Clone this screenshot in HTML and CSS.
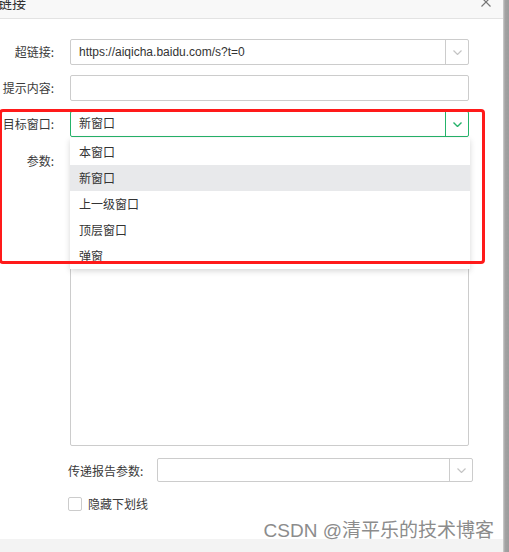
FILE: index.html
```html
<!DOCTYPE html>
<html lang="zh-CN">
  <head>
    <meta charset="utf-8">
    <link rel="stylesheet" href="styles.css">
  </head>
  <body>
    <div class="window">
      <div class="dialog">
        <div class="dlg-head">
          <span class="dlg-title">链接</span>
          <span class="dlg-close">
            <svg width="10" height="10" viewBox="0 0 10 10"><path d="M0.5 0.5 L9.5 9.5 M9.5 0.5 L0.5 9.5" stroke="#777" stroke-width="1.2" fill="none"/></svg>
          </span>
        </div>

        <div class="dlg-body">
          <div class="form-grid">
            <label class="lbl">超链接:</label>
            <div class="select">
              <span class="select-val">https://aiqicha.baidu.com/s?t=0</span>
              <span class="select-btn">
                <svg width="9" height="5" viewBox="0 0 9 5"><path d="M0.5 0.5 L4.5 4.5 L8.5 0.5" stroke="#c4c4c4" stroke-width="1.2" fill="none"/></svg>
              </span>
            </div>

            <label class="lbl">提示内容:</label>
            <div class="text-input"></div>

            <label class="lbl">目标窗口:</label>
            <div class="select active">
              <span class="select-val">新窗口</span>
              <span class="select-btn">
                <svg width="9" height="5" viewBox="0 0 9 5"><path d="M0.5 0.5 L4.5 4.5 L8.5 0.5" stroke="#25b36a" stroke-width="1.4" fill="none"/></svg>
              </span>
              <ul class="menu">
                <li>本窗口</li>
                <li class="hover">新窗口</li>
                <li>上一级窗口</li>
                <li>顶层窗口</li>
                <li>弹窗</li>
              </ul>
            </div>

            <label class="lbl lbl-top">参数:</label>
            <div class="textarea"></div>
          </div>

          <div class="extra">
            <div class="extra-row">
              <label class="lbl-plain">传递报告参数:</label>
              <div class="select small">
                <span class="select-val"></span>
                <span class="select-btn">
                  <svg width="9" height="5" viewBox="0 0 9 5"><path d="M0.5 0.5 L4.5 4.5 L8.5 0.5" stroke="#c4c4c4" stroke-width="1.2" fill="none"/></svg>
                </span>
              </div>
            </div>
            <label class="check-row">
              <span class="checkbox"></span>
              <span>隐藏下划线</span>
            </label>
          </div>
        </div>

        <div class="dlg-foot"></div>

        <div class="mark-box"></div>
        <div class="watermark">CSDN @清平乐的技术博客</div>
      </div>
      <div class="scrollbar"></div>
    </div>
  </body>
</html>
```

FILE: styles.css
```css
body {
  margin: 0;
  background: #ffffff;
  font-family: "Liberation Sans", "Noto Sans CJK SC", sans-serif;
  font-size: 12px;
  color: #333333;
  overflow: hidden;
}

.window {
  display: flex;
  align-items: flex-start;
  height: 552px;
  overflow: hidden;
}

.dialog {
  position: relative;
  width: 503px;
  height: 562px;
  margin-top: -10px;
  display: flex;
  flex-direction: column;
  background: #ffffff;
}

.scrollbar {
  width: 6px;
  height: 552px;
  background: linear-gradient(to right, #d0d0d0, #a3a3a3 2px, #9c9c9c);
}

.dlg-head {
  height: 29px;
  box-sizing: border-box;
  background: #f8f8f8;
  border-bottom: 1px solid #e3e3e3;
  display: flex;
  justify-content: space-between;
  align-items: center;
  padding: 0 12px 5px 0;
}

.dlg-title {
  font-family: "Noto Sans CJK SC", sans-serif;
  font-size: 14px;
  color: #333333;
  margin-left: -2px;
}

.dlg-close {
  display: flex;
}

.dlg-body {
  padding-top: 20px;
}

.form-grid {
  display: grid;
  grid-template-columns: 54px 399px;
  grid-template-rows: 26px 26px 26px 299px;
  column-gap: 16px;
  row-gap: 10px;
}

.lbl {
  font-family: "Noto Sans CJK SC", sans-serif;
  text-align: right;
  white-space: nowrap;
  line-height: 26px;
  color: #3a3a3a;
}

.lbl-top {
  line-height: 14px;
  padding-top: 7px;
}

.select,
.text-input,
.textarea {
  box-sizing: border-box;
  border: 1px solid #cccccc;
  border-radius: 2px;
  background: #ffffff;
}

.select {
  position: relative;
  display: flex;
}

.select-val {
  flex: 1;
  padding-left: 8px;
  line-height: 24px;
  color: #333333;
}

.select-btn {
  width: 22px;
  border-left: 1px solid #cccccc;
  display: flex;
  align-items: center;
  justify-content: center;
}

.select.active {
  border-color: #25b36a;
}

.select.active .select-btn {
  border-left-color: #25b36a;
}

.menu {
  position: absolute;
  left: -1px;
  top: 26px;
  width: 400px;
  margin: 0;
  padding: 1px 0 0;
  list-style: none;
  background: #ffffff;
  box-shadow: 0 2px 6px rgba(0, 0, 0, 0.16);
  z-index: 2;
}

.menu li {
  height: 26px;
  line-height: 26px;
  padding-left: 9px;
  font-family: "Noto Sans CJK SC", sans-serif;
  color: #333333;
}

.menu li.hover {
  background: #e8e9eb;
}

.extra {
  padding-left: 68px;
}

.extra-row {
  display: flex;
  align-items: center;
  margin-top: 12px;
  gap: 14px;
}

.lbl-plain {
  font-family: "Noto Sans CJK SC", sans-serif;
  width: 75px;
  white-space: nowrap;
  color: #3a3a3a;
}

.select.small {
  width: 316px;
  height: 24px;
}

.select.small .select-val {
  line-height: 22px;
}

.check-row {
  display: flex;
  align-items: center;
  gap: 6px;
  margin-top: 13px;
  font-family: "Noto Sans CJK SC", sans-serif;
  color: #3a3a3a;
}

.checkbox {
  width: 14px;
  height: 14px;
  box-sizing: border-box;
  border: 1px solid #cccccc;
  border-radius: 2px;
}

.dlg-foot {
  margin-top: auto;
  height: 13px;
  background: #f3f3f3;
}

/* red annotation box drawn over the screenshot */
.mark-box {
  position: absolute;
  left: -1px;
  top: 119px;
  width: 486px;
  height: 155px;
  box-sizing: border-box;
  border: 3px solid #ff1a1a;
  border-radius: 4px;
  z-index: 3;
}

.watermark {
  position: absolute;
  right: 9px;
  bottom: 9px;
  font-family: "Liberation Sans", "Noto Sans CJK SC", sans-serif;
  font-size: 19px;
  line-height: 24px;
  color: #8c8c8c;
  text-shadow: 0 0 1px rgba(255, 255, 255, 0.8);
  z-index: 4;
}
```
